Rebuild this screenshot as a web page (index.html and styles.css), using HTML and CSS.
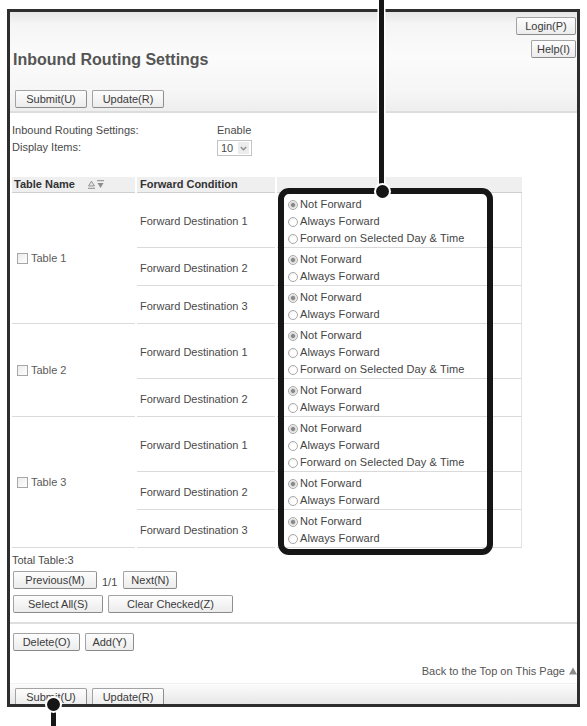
FILE: index.html
```html
<!DOCTYPE html>
<html lang="en">
<head>
<meta charset="utf-8">
<title>Inbound Routing Settings</title>
<link rel="stylesheet" href="styles.css">
</head>
<body>
<div class="page">
  <div class="frame">
    <header class="top">
      <div class="top-row">
        <h1 class="title">Inbound Routing Settings</h1>
        <div class="links">
          <button class="btn w-login" type="button">Login(P)</button>
          <button class="btn w-help" type="button">Help(I)</button>
        </div>
      </div>
      <div class="actions">
        <button class="btn w-72" type="button">Submit(U)</button>
        <button class="btn w-72" type="button">Update(R)</button>
      </div>
    </header>

    <div class="settings">
      <span>Inbound Routing Settings:</span>
      <span>Enable</span>
      <span>Display Items:</span>
      <span class="select">
        <span class="sel-val">10</span>
        <span class="sel-arrow"><svg width="7" height="5" viewBox="0 0 7 5"><path d="M0.8 1 L3.5 3.8 L6.2 1" fill="none" stroke="#8a8a8a" stroke-width="1.3"/></svg></span>
      </span>
    </div>

    <table class="routes">
      <colgroup><col class="c1"><col class="c2"><col class="c3"></colgroup>
      <thead>
        <tr>
          <th class="h-name">Table Name <svg class="sort" width="17" height="9" viewBox="0 0 17 9"><path d="M1.5 6 L4.5 1.2 L7.5 6 Z" fill="#e2e2e2" stroke="#8c8c8c" stroke-width="0.9"/><path d="M1 8.3 H8" stroke="#8c8c8c" stroke-width="1"/><path d="M10 0.7 H17" stroke="#8c8c8c" stroke-width="1"/><path d="M10.5 3 L16.5 3 L13.5 8 Z" fill="#8c8c8c"/></svg></th>
          <th class="h-dest">Forward Condition</th>
          <th class="h-opts"></th>
        </tr>
      </thead>
      <tbody>
        <tr>
          <td class="name" rowspan="3"><label class="chk"><input type="checkbox"><span>Table 1</span></label></td>
          <td class="dest">Forward Destination 1</td>
          <td class="opts">
            <label class="opt"><input type="radio" name="t1d1" checked><span>Not Forward</span></label>
            <label class="opt"><input type="radio" name="t1d1"><span>Always Forward</span></label>
            <label class="opt"><input type="radio" name="t1d1"><span>Forward on Selected Day &amp; Time</span></label>
          </td>
        </tr>
        <tr>
          <td class="dest">Forward Destination 2</td>
          <td class="opts">
            <label class="opt"><input type="radio" name="t1d2" checked><span>Not Forward</span></label>
            <label class="opt"><input type="radio" name="t1d2"><span>Always Forward</span></label>
          </td>
        </tr>
        <tr>
          <td class="dest">Forward Destination 3</td>
          <td class="opts">
            <label class="opt"><input type="radio" name="t1d3" checked><span>Not Forward</span></label>
            <label class="opt"><input type="radio" name="t1d3"><span>Always Forward</span></label>
          </td>
        </tr>
        <tr>
          <td class="name" rowspan="2"><label class="chk"><input type="checkbox"><span>Table 2</span></label></td>
          <td class="dest">Forward Destination 1</td>
          <td class="opts">
            <label class="opt"><input type="radio" name="t2d1" checked><span>Not Forward</span></label>
            <label class="opt"><input type="radio" name="t2d1"><span>Always Forward</span></label>
            <label class="opt"><input type="radio" name="t2d1"><span>Forward on Selected Day &amp; Time</span></label>
          </td>
        </tr>
        <tr>
          <td class="dest">Forward Destination 2</td>
          <td class="opts">
            <label class="opt"><input type="radio" name="t2d2" checked><span>Not Forward</span></label>
            <label class="opt"><input type="radio" name="t2d2"><span>Always Forward</span></label>
          </td>
        </tr>
        <tr>
          <td class="name" rowspan="3"><label class="chk"><input type="checkbox"><span>Table 3</span></label></td>
          <td class="dest">Forward Destination 1</td>
          <td class="opts">
            <label class="opt"><input type="radio" name="t3d1" checked><span>Not Forward</span></label>
            <label class="opt"><input type="radio" name="t3d1"><span>Always Forward</span></label>
            <label class="opt"><input type="radio" name="t3d1"><span>Forward on Selected Day &amp; Time</span></label>
          </td>
        </tr>
        <tr>
          <td class="dest">Forward Destination 2</td>
          <td class="opts">
            <label class="opt"><input type="radio" name="t3d2" checked><span>Not Forward</span></label>
            <label class="opt"><input type="radio" name="t3d2"><span>Always Forward</span></label>
          </td>
        </tr>
        <tr>
          <td class="dest">Forward Destination 3</td>
          <td class="opts">
            <label class="opt"><input type="radio" name="t3d3" checked><span>Not Forward</span></label>
            <label class="opt"><input type="radio" name="t3d3"><span>Always Forward</span></label>
          </td>
        </tr>
      </tbody>
    </table>

    <div class="total">Total Table:3</div>
    <div class="pager">
      <button class="btn w-prev" type="button">Previous(M)</button>
      <span class="count">1/1</span>
      <button class="btn w-next" type="button">Next(N)</button>
    </div>
    <div class="bulk">
      <button class="btn w-selall" type="button">Select All(S)</button>
      <button class="btn w-clear" type="button">Clear Checked(Z)</button>
    </div>
    <div class="ops">
      <button class="btn w-del" type="button">Delete(O)</button>
      <button class="btn w-add" type="button">Add(Y)</button>
    </div>
    <div class="backtop">Back to the Top on This Page<svg class="up" width="8" height="8" viewBox="0 0 8 8"><path d="M0 7.5 L4 0.5 L8 7.5 Z" fill="#8a8a8a"/></svg></div>
    <div class="bottom">
      <button class="btn w-72" type="button">Submit(U)</button>
      <button class="btn w-72" type="button">Update(R)</button>
    </div>
  </div>

  <div class="callout-box"></div>
  <div class="callout-line line-top"></div>
  <div class="dot dot-top"></div>
  <div class="callout-line line-bottom"></div>
  <div class="dot dot-bottom"></div>
</div>
</body>
</html>
```
FILE: styles.css
```css
* { box-sizing: border-box; }
html, body { margin: 0; padding: 0; background: #fff; }
body {
  font-family: "Liberation Sans", Arial, sans-serif;
  font-size: 11px;
  color: #4a4a4a;
}
.page {
  position: relative;
  width: 587px;
  height: 726px;
  overflow: hidden;
  padding: 9px 7px 0 7px;
}
.frame {
  width: 573px;
  height: 698px;
  border: 3px solid #2e2e2e;
  display: flex;
  flex-direction: column;
  overflow: hidden;
}

/* buttons */
.btn {
  font-family: "Liberation Sans", Arial, sans-serif;
  font-size: 11px;
  line-height: 16px;
  color: #3a3a3a;
  height: 18px;
  padding: 0;
  border: 1px solid #a3a3a3;
  border-right-color: #8e8e8e;
  border-bottom-color: #8a8a8a;
  border-radius: 2px;
  background: linear-gradient(#fdfdfd, #ececec);
  text-align: center;
  flex: none;
}
.w-72 { width: 72px; }
.w-login { width: 60px; }
.w-help { width: 45px; }
.w-prev { width: 84px; }
.w-next { width: 54px; }
.w-selall { width: 90px; }
.w-clear { width: 125px; }
.w-del { width: 67px; }
.w-add { width: 49px; }

/* header band */
.top {
  flex: none;
  background: linear-gradient(#e6e6e6 0%, #f5f5f5 12%, #fbfbfb 45%, #f6f6f6 80%, #eeeeee 100%);
  border-bottom: 2px solid #dddddd;
  padding: 5px 1px 3px 3px;
}
.top-row {
  display: flex;
  justify-content: space-between;
  align-items: flex-start;
}
.title {
  margin: 33px 0 0 0;
  font-size: 16px;
  line-height: 19px;
  font-weight: bold;
  color: #555;
}
.links {
  display: flex;
  flex-direction: column;
  align-items: flex-end;
  gap: 5px;
}
.actions {
  display: flex;
  gap: 5px;
  margin: 21px 0 0 2px;
}

/* settings */
.settings {
  display: grid;
  grid-template-columns: 205px auto;
  line-height: 17px;
  padding: 9px 0 0 2px;
  align-items: center;
}
.select {
  display: inline-flex;
  align-items: center;
  justify-self: start;
  width: 35px;
  height: 16px;
  border: 1px solid #c4c4c4;
  background: #fff;
  padding-left: 3px;
  line-height: 14px;
  margin-top: 1px;
}
.sel-val { flex: 1; }
.sel-arrow {
  display: inline-flex;
  align-items: center;
  justify-content: center;
  width: 11px;
  height: 12px;
  margin-right: 2px;
  background: #ececec;
}

/* table */
.routes {
  border-collapse: separate;
  border-spacing: 2px 0;
  table-layout: fixed;
  width: 514px;
  margin-top: 21px;
}
col.c1 { width: 123px; }
col.c2 { width: 138px; }
col.c3 { width: 245px; }
.routes th {
  background: #efefef;
  border-bottom: 1px solid #cfcfcf;
  height: 16px;
  line-height: 15px;
  padding: 0 2px;
  text-align: left;
  font-weight: bold;
  color: #333;
  white-space: nowrap;
}
.routes th.h-dest { padding-left: 3px; }
.sort { margin-left: 9px; vertical-align: -1px; }
.routes td {
  border-bottom: 1px solid #dadada;
  padding: 3px 0 0 0;
  vertical-align: middle;
  line-height: 17px;
}
.routes td.name { padding-left: 5px; color: #5a5a5a; }
.routes td.dest { padding-left: 3px; }
.routes td.opts {
  padding-left: 11px;
  border-right: 1px solid #e3e3e3;
  vertical-align: top;
}
.chk {
  display: inline-flex;
  align-items: center;
  gap: 3px;
}
.chk input {
  appearance: none;
  -webkit-appearance: none;
  margin: 0;
  width: 11px;
  height: 11px;
  border: 1px solid #a6a6a6;
  background: linear-gradient(135deg, #ececec, #ffffff);
}
.opt {
  display: flex;
  align-items: center;
  height: 17px;
  white-space: nowrap;
  color: #444;
  letter-spacing: 0.1px;
}
.opt input {
  appearance: none;
  -webkit-appearance: none;
  margin: 0 2px 0 0;
  width: 10px;
  height: 10px;
  border: 1px solid #a9a9a9;
  border-radius: 50%;
  background: radial-gradient(circle at 60% 60%, #ffffff 0, #ffffff 40%, #e4e4e4 100%);
}
.opt input:checked {
  background: radial-gradient(circle, #8a8a8a 0, #8a8a8a 1.6px, #d6d6d6 2.4px, #f4f4f4 4px);
}

/* footer part */
.total {
  margin: 4px 0 0 2px;
  line-height: 17px;
}
.pager {
  display: flex;
  align-items: center;
  gap: 5px;
  margin: 2px 0 0 3px;
}
.count { margin: 3px 1px 0 0; }
.bulk {
  display: flex;
  gap: 5px;
  margin: 6px 0 0 3px;
}
.ops {
  display: flex;
  gap: 5px;
  margin-top: 9px;
  border-top: 2px solid #dedede;
  padding: 9px 0 0 3px;
}
.backtop {
  margin-top: 12px;
  line-height: 17px;
  text-align: right;
  color: #555;
}
.up { margin-left: 4px; vertical-align: 0; }
.bottom {
  margin-top: auto;
  height: 21px;
  overflow: hidden;
  display: flex;
  gap: 5px;
  padding: 4px 0 0 5px;
  background: linear-gradient(#fcfcfc, #e7e7e7);
  border-top: 1px solid #f2f2f2;
}

/* annotation callout */
.callout-box {
  position: absolute;
  left: 278px;
  top: 188px;
  width: 215px;
  height: 367px;
  border: 6px solid #161616;
  border-radius: 11px;
}
.callout-line {
  position: absolute;
  width: 5px;
  background: #161616;
  box-shadow: 0 0 0 1.5px #fff;
}
.line-top { left: 379px; top: 0; height: 190px; }
.line-bottom { left: 51px; top: 706px; height: 20px; }
.dot {
  position: absolute;
  width: 13px;
  height: 13px;
  border-radius: 50%;
  background: #161616;
  box-shadow: 0 0 0 2px #fff;
}
.dot-top { left: 375.5px; top: 185px; }
.dot-bottom { left: 47px; top: 698px; }
```
